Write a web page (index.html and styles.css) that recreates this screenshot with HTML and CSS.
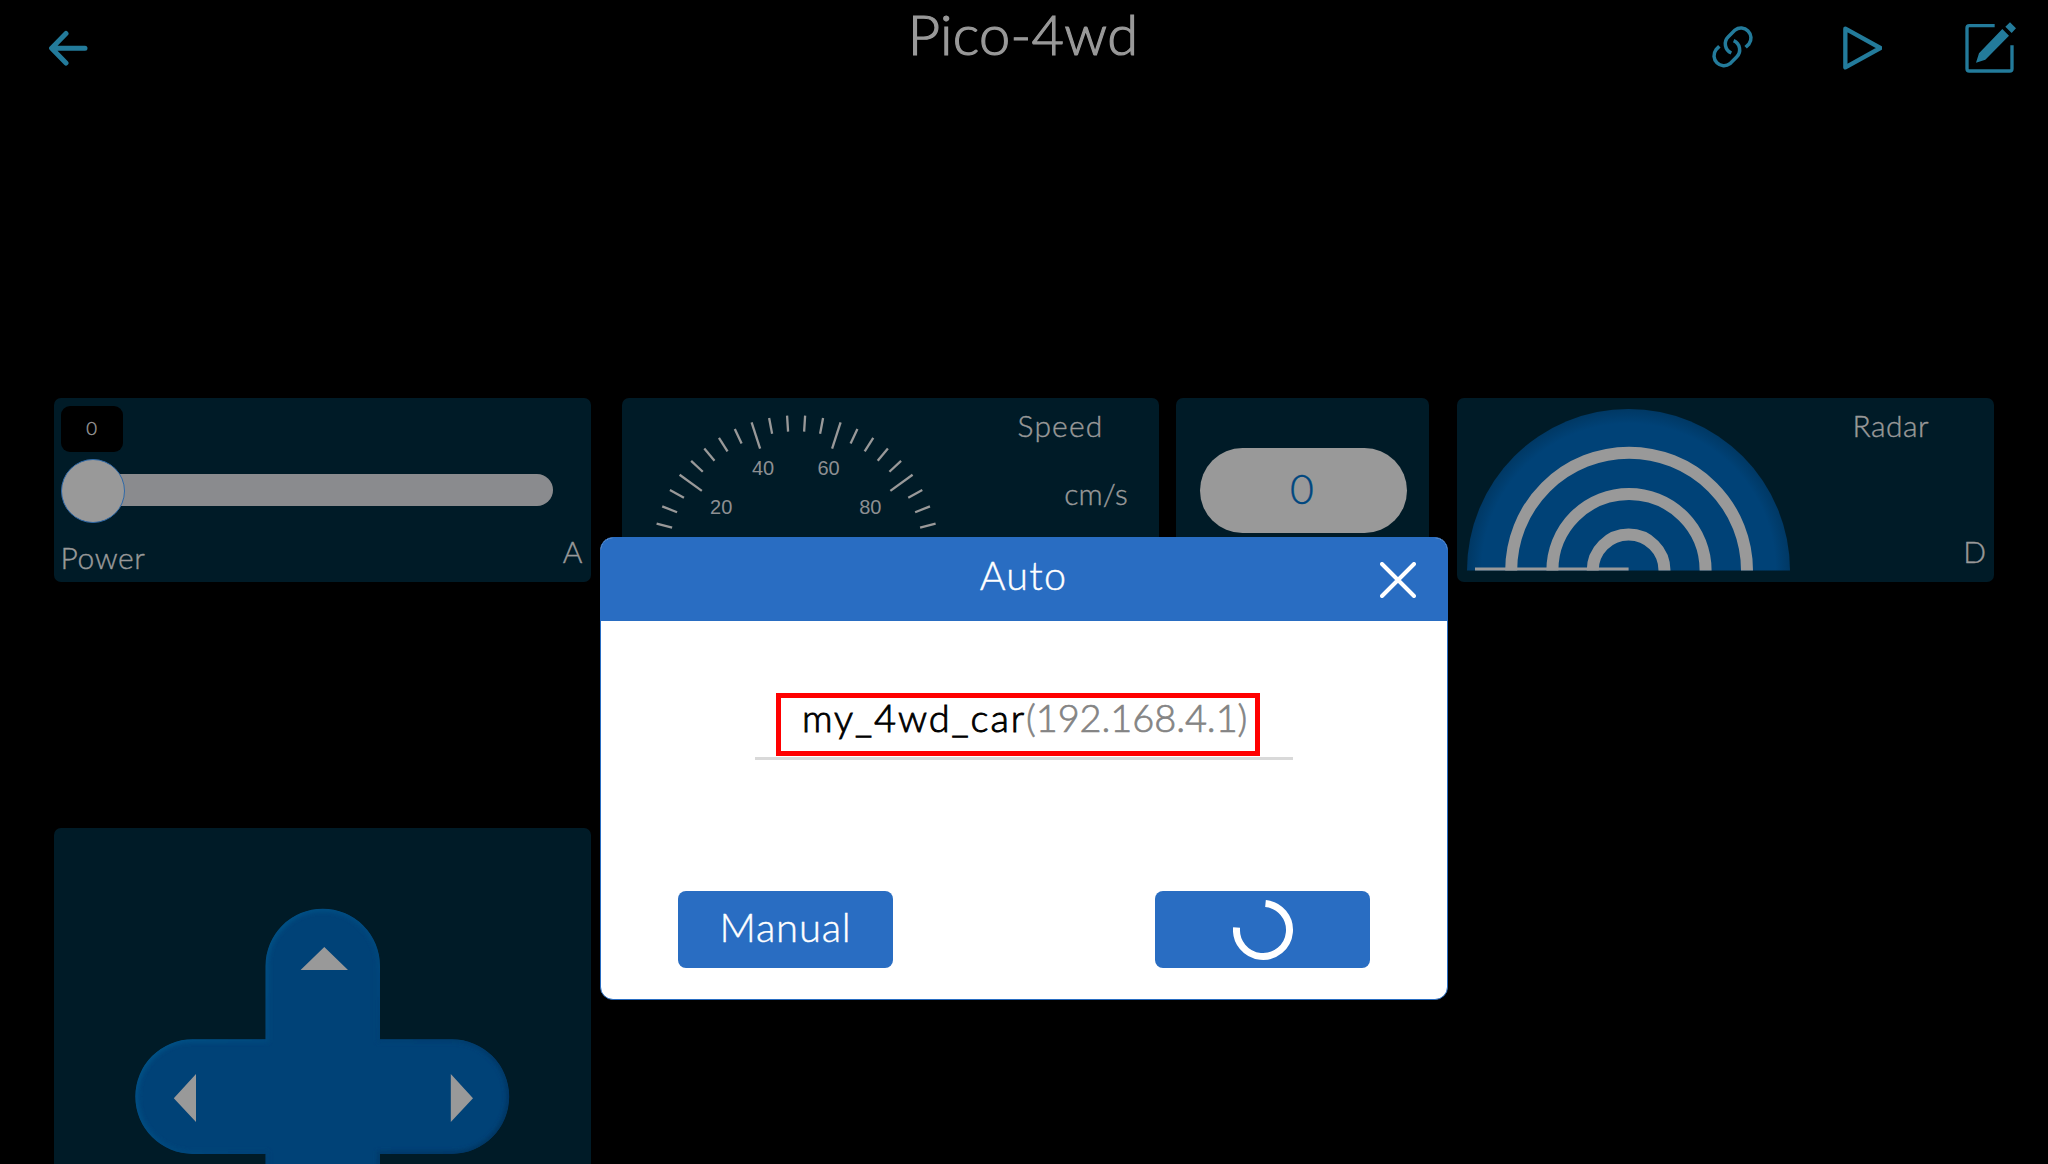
FILE: index.html
```html
<!DOCTYPE html>
<html lang="en">
<head>
<meta charset="utf-8">
<title>Pico-4wd</title>
<link rel="stylesheet" href="styles.css">
</head>
<body>
<header class="topbar">
  <svg class="icon back" viewBox="0 0 40 36"><path d="M37 18.3H4M18 3.5 3.6 18.3 18 33"/></svg>
  <h1 class="title">Pico-4wd</h1>
  <nav class="actions">
    <svg class="icon link" viewBox="64 74 130 131">
      <path d="M168 141L178 131A30 30 0 0 0 136 89L116 109A30 30 0 0 0 125 158"/>
      <path d="M168 141L178 131A30 30 0 0 0 136 89L116 109A30 30 0 0 0 125 158" transform="rotate(180 128.5 139.5)"/>
    </svg>
    <svg class="icon play" viewBox="458 79 119 132"><path d="M465 87 570 145 465 203Z"/></svg>
    <svg class="icon edit" viewBox="825 66 156 153">
      <path d="M914 77H838Q831 77 831 84V206Q831 213 838 213H959Q966 213 966 206V136"/>
      <path class="solid" d="M937 87 957 107 886 179 858 188 867 160ZM960 67 978 85 965 99 946 80Z"/>
    </svg>
  </nav>
</header>

<main class="widgets">
  <section class="card slider">
    <div class="badge">0</div>
    <div class="slider-row"><span class="knob"></span><span class="track"></span></div>
    <div class="slider-foot"><span class="label power">Power</span><span class="label">A</span></div>
  </section>

  <section class="card gauge">
    <svg class="dial" viewBox="0 0 340 184">
      <g id="ticks" transform="translate(174.1 161.4)"></g>
      <text x="99.2" y="116">20</text>
      <text x="141" y="76.5">40</text>
      <text x="206.5" y="76.5">60</text>
      <text x="248.3" y="116">80</text>
    </svg>
    <div class="side">
      <span class="label speed">Speed</span>
      <span class="label unit">cm/s</span>
    </div>
  </section>

  <section class="card value"><div class="pill">0</div></section>

  <section class="card radar">
    <svg class="dome" viewBox="0 0 324 162">
      <defs>
        <radialGradient id="shade" gradientUnits="userSpaceOnUse" cx="161.6" cy="161.5" r="161.5">
          <stop offset="0.91" stop-color="#004277"/>
          <stop offset="1" stop-color="#003864"/>
        </radialGradient>
      </defs>
      <path d="M0 161.5A161.5 161.5 0 0 1 323 161.5Z" fill="url(#shade)"/>
      <g class="rings">
        <path d="M44.2 161.5A117.9 117.9 0 0 1 280 161.5"/>
        <path d="M85.4 161.5A76.6 76.6 0 0 1 238.6 161.5"/>
        <path d="M125.7 161.5A35.9 35.9 0 0 1 197.5 161.5"/>
      </g>
      <path d="M8 158.5H161.6V161.5H8Z" fill="#999"/>
    </svg>
    <div class="side">
      <span class="label name">Radar</span>
      <span class="label key">D</span>
    </div>
  </section>

  <section class="card pad">
    <svg class="cross" viewBox="135 908 375 256">
      <defs>
        <linearGradient id="rim" gradientUnits="userSpaceOnUse" x1="200" y1="950" x2="450" y2="1190">
          <stop offset="0" stop-color="#00568a"/>
          <stop offset="0.5" stop-color="#004277"/>
          <stop offset="1" stop-color="#003460"/>
        </linearGradient>
        <clipPath id="shape"><path id="plus" d="M265.5 1039.3V966A57.25 57.25 0 0 1 380 966V1039.3H452A57.3 57.3 0 0 1 452 1153.9H380V1240H265.5V1153.900H192.500A57.3 57.3 0 0 1 192.500 1039.3Z"/></clipPath>
        <filter id="soft" x="-10%" y="-10%" width="120%" height="120%"><feGaussianBlur stdDeviation="2"/></filter>
      </defs>
      <g clip-path="url(#shape)">
        <use href="#plus" fill="#004277"/>
        <use href="#plus" fill="none" stroke="url(#rim)" stroke-width="6" filter="url(#soft)"/>
      </g>
      <path fill="#999" d="M324.3 947 348 970H300.6ZM173.8 1098.3 196 1074V1122ZM473 1098.3 450.8 1074V1122Z"/>
    </svg>
  </section>
</main>

<div class="dialog" role="dialog">
  <div class="dialog-head">
    <span class="dialog-title">Auto</span>
    <svg class="close" viewBox="0 0 36 36"><path d="M2 2 34 34M34 2 2 34"/></svg>
  </div>
  <div class="field">
    <div class="device"><span class="device-name">my_4wd_car</span><span class="device-ip">(192.168.4.1)</span></div>
  </div>
  <div class="buttons">
    <button class="btn">Manual</button>
    <button class="btn">
      <svg class="spinner" viewBox="0 0 60 60"><path d="M32.5 3.6A26.5 26.5 0 1 1 3.6 27.5"/></svg>
    </button>
  </div>
</div>
<script src="gauge.js"></script>
</body>
</html>
```
FILE: gauge.js
```js
// Dial ticks: one per 4 units, 7.2 degrees apart, long ones every 20 units.
const ticks = document.getElementById('ticks');
for (let v = 0; v <= 100; v += 4) {
  const line = document.createElementNS('http://www.w3.org/2000/svg', 'line');
  line.setAttribute('y1', -144);
  line.setAttribute('y2', v % 20 ? -128 : -116.5);
  line.setAttribute('transform', `rotate(${(v - 50) * 1.8})`);
  ticks.appendChild(line);
}
```
FILE: styles.css
```css
* { box-sizing: border-box; }

body {
  margin: 0;
  width: 2048px;
  height: 1164px;
  overflow: hidden;
  position: relative;
  background: #000;
  color: #999;
  font-family: Lato, "Open Sans", sans-serif;
  font-weight: 300;
  -webkit-text-stroke: 0.4px currentColor;
}

.topbar {
  display: grid;
  grid-template-columns: 1fr auto 1fr;
  align-items: start;
  height: 398px;
  padding: 0 31px 0 48px;
}
.icon { display: block; fill: none; stroke: #237b9b; }
.back { width: 40px; height: 36px; margin-top: 30px; stroke-width: 5; stroke-linecap: round; stroke-linejoin: round; }
.title {
  margin: 1.5px 0 0 -19px;
  font-size: 56px;
  line-height: 64px;
  font-weight: 300;
  letter-spacing: 0.3px;
  -webkit-text-stroke-width: 1.2px;
}
.actions { display: flex; justify-content: flex-end; align-items: flex-start; }
.link { width: 43.3px; height: 43.7px; margin: 24.5px 88px 0 0; stroke-width: 10.5; }
.play { width: 39.7px; height: 44px; margin: 26.3px 82.7px 0 0; stroke-width: 13; stroke-linejoin: round; }
.edit { width: 52px; height: 51px; margin-top: 22px; stroke-width: 10; }
.edit .solid { fill: #237b9b; stroke: none; }

.widgets {
  display: grid;
  grid-template-columns: 537px 31px 537px 17px 253px 28px 537px;
  grid-template-rows: 184px 346px;
  row-gap: 246px;
  padding-left: 54px;
}
.card { background: #001b27; border-radius: 7px; }
.slider { grid-column: 1; }
.gauge { grid-column: 3; }
.value { grid-column: 5; }
.radar { grid-column: 7; }
.pad { grid-column: 1; }

.label { font-size: 30px; line-height: 37px; letter-spacing: 0.5px; }

.slider { padding: 7.5px 8px 0 6.5px; }
.badge {
  width: 62px;
  height: 46px;
  border-radius: 9px;
  background: #000;
  font-size: 18.5px;
  line-height: 45px;
  text-align: center;
}
.slider-row { display: flex; align-items: center; height: 63px; margin-top: 8px; }
.knob {
  width: 64px;
  height: 64px;
  border-radius: 50%;
  border: 1px solid #2f69a8;
  background: #999;
  z-index: 1;
}
.track {
  width: 445.5px;
  height: 32px;
  margin: -2px 0 0 -17px;
  border-radius: 0 16px 16px 0;
  background: #8a8b8e;
}
.slider-foot { display: flex; justify-content: space-between; margin-top: 10.5px; }
.power { padding-top: 6px; letter-spacing: 0.6px; }

.gauge, .radar { display: flex; }
.dial { width: 340px; height: 184px; }
.dial line { stroke: #999; stroke-width: 2.3; }
.dial text {
  fill: #8d8f92;
  font: 400 20px "Liberation Sans", Arial, sans-serif;
  text-anchor: middle;
  -webkit-text-stroke-width: 0;
}
.side { flex: 1; display: flex; flex-direction: column; padding-top: 9px; }
.speed { padding-left: 55.5px; letter-spacing: 1.2px; }
.unit { margin-top: 31px; align-self: flex-end; padding-right: 31px; letter-spacing: 0.2px; }

.pill {
  width: 207px;
  height: 85px;
  margin: 50px 0 0 23.5px;
  border-radius: 42.5px;
  background: #999;
  color: #00477f;
  font-size: 41px;
  line-height: 82px;
  text-align: center;
  text-indent: -2px;
}

.dome { width: 324px; height: 162px; margin: 10.5px 0 0 10px; }
.rings { fill: none; stroke: #999; stroke-width: 12; }
.name { padding-left: 61.5px; }
.key { margin-top: 89px; align-self: flex-end; padding-right: 7.5px; }

.pad { border-radius: 7px 7px 0 0; }
.cross { display: block; width: 375px; height: 256px; margin: 80px 0 0 81px; }

.dialog {
  position: absolute;
  left: 600px;
  top: 537px;
  width: 848px;
  height: 463px;
  border: 1px solid #296dc2;
  border-radius: 13px;
  background: #fff;
  overflow: hidden;
}
.dialog-head {
  display: grid;
  grid-template-columns: 1fr auto 1fr;
  height: 83px;
  background: #296dc2;
  color: #fff;
}
.dialog-title { grid-column: 2; font-size: 39.5px; line-height: 74px; letter-spacing: 1.2px; margin-left: -1px; }
.close {
  width: 36px;
  height: 36px;
  justify-self: end;
  margin: 23.5px 31px 0 0;
  fill: none;
  stroke: #fff;
  stroke-width: 4;
  stroke-linecap: round;
}
.field {
  width: 538px;
  height: 67px;
  margin: 72px 0 0 154px;
  padding-left: 21px;
  border-bottom: 3px solid #d9d9d9;
}
.device {
  width: 484px;
  height: 63px;
  border: 5px solid #f00;
  padding-left: 21px;
  font-size: 38px;
  line-height: 39px;
  white-space: nowrap;
}
.device-name { color: #000; letter-spacing: 1.9px; -webkit-text-stroke-width: 0.9px; }
.device-ip { color: #848484; letter-spacing: -0.1px; -webkit-text-stroke-width: 0.7px; }
.buttons { display: flex; justify-content: space-between; padding: 130.5px 77px 0; }
.btn {
  display: flex;
  align-items: center;
  justify-content: center;
  width: 215px;
  height: 77px;
  padding: 0 0 5px;
  border: 0;
  border-radius: 8px;
  background: #296dc2;
  color: #fff;
  font: 300 40px Lato, sans-serif;
  letter-spacing: 0.8px;
}
.spinner { width: 60px; height: 60px; margin-top: 6px; fill: none; stroke: #fff; stroke-width: 7; }
```
